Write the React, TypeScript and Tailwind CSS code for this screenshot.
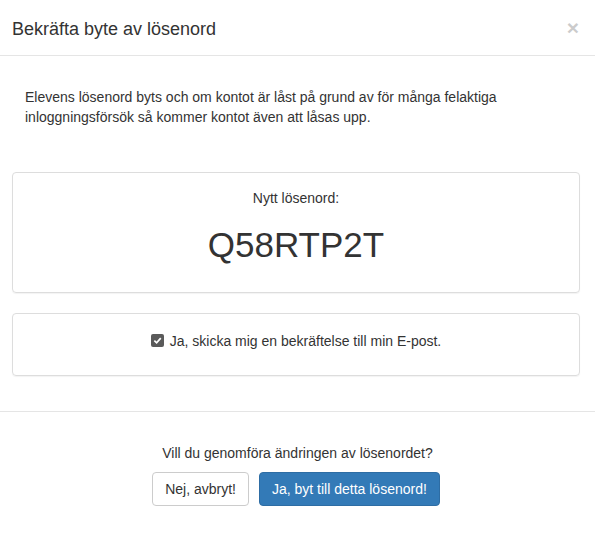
import React from 'react';

export default function App() {
  return (
    <div className="w-[595px] h-[535px] bg-white text-[#333] font-['Liberation_Sans',Arial,sans-serif] text-[14px] leading-[20px] overflow-hidden">
      {/* header */}
      <div className="h-[56px] flex items-center justify-between pl-[12px] pr-[16px] border-b border-[#e5e5e5]">
        <h4 className="text-[18px] leading-[26px] text-[#333] pt-[2px]">Bekräfta byte av lösenord</h4>
        <button className="text-[21px] font-bold leading-none text-black opacity-20">×</button>
      </div>

      {/* body */}
      <div className="pl-[12px] pr-[15px] pt-[31px] pb-[35px]">
        <p className="pl-[13px] pr-[20px]">
          Elevens lösenord byts och om kontot är låst på grund av för många felaktiga inloggningsförsök så kommer kontot även att låsas upp.
        </p>

        <div className="mt-[45px] h-[121px] rounded-[4px] border border-[#ddd] shadow-[0_1px_1px_rgba(0,0,0,0.05)] flex flex-col items-center pt-[15px]">
          <div>Nytt lösenord:</div>
          <div className="mt-[17px] text-[35px] leading-[40px]">Q58RTP2T</div>
        </div>

        <div className="mt-[20px] h-[63px] rounded-[4px] border border-[#ddd] shadow-[0_1px_1px_rgba(0,0,0,0.05)] flex items-center justify-center pb-[8px]">
          <label className="flex items-center gap-[6px]">
            <span className="w-[13px] h-[13px] rounded-[2px] bg-[#5a5a5a] flex items-center justify-center">
              <svg width="9" height="9" viewBox="0 0 10 10">
                <path d="M1.5 5.2 L4 7.6 L8.6 2.4" fill="none" stroke="white" strokeWidth="1.9" />
              </svg>
            </span>
            <span>Ja, skicka mig en bekräftelse till min E-post.</span>
          </label>
        </div>
      </div>

      {/* footer */}
      <div className="border-t border-[#e5e5e5] pt-[31px] flex flex-col items-center">
        <p>Vill du genomföra ändringen av lösenordet?</p>
        <div className="mt-[9px] flex gap-[10px] pr-[3px]">
          <button className="h-[34px] px-[12px] rounded-[4px] border border-[#ccc] bg-white text-[#333]">Nej, avbryt!</button>
          <button className="h-[34px] px-[12px] rounded-[4px] border border-[#2e6da4] bg-[#337ab7] text-white">Ja, byt till detta lösenord!</button>
        </div>
      </div>
    </div>
  );
}
